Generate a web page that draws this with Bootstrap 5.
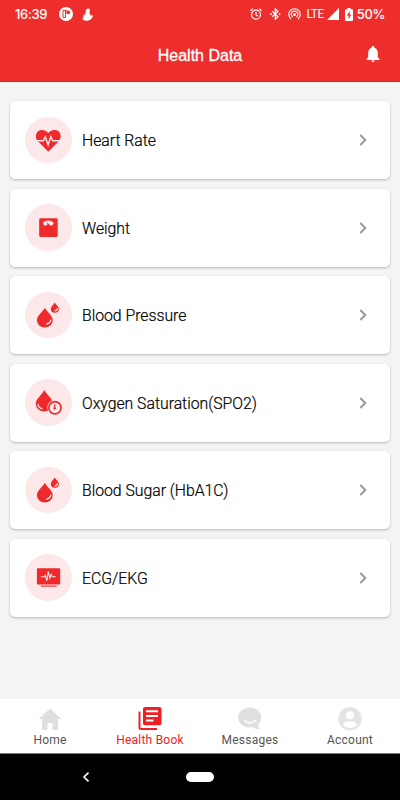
<!DOCTYPE html>
<html lang="en">
<head>
<meta charset="utf-8">
<meta name="viewport" content="width=device-width, initial-scale=1">
<title>Health Data</title>
<link href="https://cdn.jsdelivr.net/npm/bootstrap@5.3.0/dist/css/bootstrap.min.css" rel="stylesheet">
<style>
body{font-family:Roboto,"Liberation Sans",sans-serif;background:#f4f4f4;height:800px;overflow:hidden}
svg{display:block;flex:none}
.app-top{background:#ee2e2c;height:82px;border-bottom:1px solid #f01416;color:#fff}
.status-row{height:28px;padding:0 15px 0 15px;font-family:Inter,sans-serif;font-weight:500;font-size:13px;line-height:28px;letter-spacing:-.35px}
.lte{font-family:Roboto,sans-serif;font-weight:400;font-size:12px;letter-spacing:-.55px}
.title-row{height:53px;padding:0 20px 0 34px}
.app-title{font:500 16px/20px "Liberation Sans",sans-serif;-webkit-text-stroke:.3px #fff;padding-top:2px}
#st-p{margin-left:11.5px}
#st-duck{margin-left:9px;margin-right:auto}
#st-bt{margin-left:8px}
#st-hot{margin-left:7px}
.lte{margin-left:6px}
#st-sig{margin-left:3px}
#st-bat{margin-left:6.500px}
#st-pct{margin-left:3.500px}
.items{padding:19px 10px 0;gap:9.5px}
.item{height:78px;border-radius:5px;padding:0 23px 0 15px;box-shadow:0 1px 2.5px rgba(0,0,0,.25);background:#fff}
.disc{width:46.6px;height:46.6px;background:#fce8e9}
.item-name{font-size:15.8px;font-weight:300;line-height:20px;color:#000;margin-left:10.4px;letter-spacing:-.02px;padding-top:2px;-webkit-text-stroke:.2px #000}
.tabs{height:55px;background:#fff;border-bottom:1px solid #777}
.tab{color:#555;font-size:12px;line-height:14px;letter-spacing:.22px;padding-top:8px}
.tab.on{color:#ee2025}
.sys{height:46px;background:#000}
.back{margin-left:81px;margin-right:95px}
.pill{width:28px;height:10px;background:#fff}
</style>
<script src="https://cdn.jsdelivr.net/npm/bootstrap@5.3.0/dist/js/bootstrap.bundle.min.js"></script>
</head>
<body class="d-flex flex-column m-0">
<svg width="0" height="0" class="position-absolute" aria-hidden="true">
<symbol id="drops" viewBox="0 0 47 47"><path fill="#ee2a2c" d="M20 16C17.500 20.500 12 24 12 28.500A7.900 7.300 0 0 0 28 28.500C28 24 22.500 20.500 20 16ZM30 10.500C28.500 13 26 14.300 26 17A4.100 4 0 0 0 34.200 17C34.200 14.300 31.500 13 30 10.500Z"/><path d="M22 32.500Q25.500 31.500 26 28.500M30.500 19Q32.500 18.700 32.700 16.800" fill="none" stroke="#fce8e9" stroke-width="1.300" stroke-linecap="round"/></symbol>
<symbol id="chev" viewBox="0 0 8 14"><path d="M1.300 2L6.300 7L1.300 12" fill="none" stroke="#979797" stroke-width="1.900"/></symbol>
</svg>
<header class="app-top">
<div class="status-row d-flex align-items-center">
<span>16:39</span>
<svg id="st-p" width="14" height="14" viewBox="0 0 14 14"><circle cx="7" cy="7" r="7" fill="#fff"/><path d="M4 10.500V3.300H6.500V10.500ZM6.500 3.300H8" fill="none" stroke="#ee2e2c" stroke-width="1"/><circle cx="9.200" cy="5.300" r="1.900" fill="#ee2e2c"/></svg>
<svg id="st-duck" width="11" height="13" viewBox="0 0 11 13"><path fill="#fff" d="M4.300 1.500Q5.200 0 6.800 .5Q8.400 1.200 7.900 3.200L7.200 4.800Q8.600 6 8.400 7.600L10.900 7.200Q10.800 9.600 9.200 11Q7.500 12.800 4.500 12.700Q.8 12.500 .3 10L2 9.300L.7 7.700L3.300 6.700L2.300 5.500L4.400 4.600L3.300 3Z"/></svg>
<svg id="st-alarm" width="12" height="12" viewBox="0 0 12 12"><g fill="none" stroke="#fff" stroke-width="1.200"><circle cx="6" cy="6.700" r="4.500"/><path d="M6 4V7L8.100 8.300M.4 2.700L2.900.6M11.600 2.700L9.100.6"/></g></svg>
<svg id="st-bt" width="11" height="12" viewBox="0 0 11 12"><path d="M2.200 3.200L8 8.800L5.300 11.200V.8L8 3.200L2.200 8.800" fill="none" stroke="#fff" stroke-width="1.200"/><circle cx="1" cy="6" r=".9" fill="#fff"/><circle cx="9.600" cy="6" r=".9" fill="#fff"/></svg>
<svg id="st-hot" width="13" height="12" viewBox="0 0 13 12"><g fill="none" stroke="#fff" stroke-width="1.150"><path d="M3.100 11A5.700 5.700 0 1 1 9.900 11M4.500 9A3.300 3.300 0 1 1 8.500 9"/></g><circle cx="6.500" cy="6.700" r="1.400" fill="#fff"/></svg>
<span class="lte">LTE</span>
<svg id="st-sig" width="12" height="12" viewBox="0 0 12 12"><path d="M12 0V12H0Z" fill="#fff"/></svg>
<svg id="st-bat" width="8" height="13" viewBox="0 0 8 13"><path d="M2.500 0H5.500V1.200H7Q8 1.200 8 2.200V12Q8 13 7 13H1Q0 13 0 12V2.200Q0 1.200 1 1.200H2.500Z" fill="#fff"/><path d="M4.700 3L1.800 7.500H3.600V11.200L6.300 6.600H4.700Z" fill="#ee2e2c"/></svg>
<span id="st-pct">50%</span>
</div>
<div class="title-row d-flex align-items-center">
<div class="app-title flex-grow-1 text-center">Health Data</div>
<svg width="14" height="17" viewBox="0 0 14 17"><path fill="#fff" d="M7 0C8 0 8.400.7 8.400 1.700C10.800 2.300 11.800 4.500 11.800 7V11.200L13.500 13V14H.5V13L2.200 11.200V7C2.200 4.500 3.200 2.300 5.600 1.700C5.600.7 6 0 7 0ZM5.400 14.600H8.600Q8.500 16.300 7 16.300T5.400 14.600Z"/></svg>
</div>
</header>
<main class="items d-flex flex-column flex-grow-1">
<div class="item d-flex align-items-center"><div class="disc rounded-circle"><svg width="46.600" height="46.600" viewBox="0 0 47 47"><path fill="#ee2a2c" d="M23.500 35L13 24.500C9 19.500 11.500 13 17 13Q21 13 23.500 16.200Q26 13 30 13C35.500 13 38 19.500 34 24.500Z"/><path d="M10 24H18.500L20.500 20L23.300 28L26 20L28 24H37" fill="none" stroke="#fce8e9" stroke-width="1.500"/></svg></div><div class="item-name flex-grow-1">Heart Rate</div><svg width="8" height="14"><use href="#chev"/></svg></div>
<div class="item d-flex align-items-center"><div class="disc rounded-circle"><svg width="46.600" height="46.600" viewBox="0 0 47 47"><rect x="14.300" y="14.300" width="18.700" height="19" rx="1.500" fill="#ee2a2c"/><path d="M18 18.700Q23.500 14.700 29 18.700L27.500 22Q26 21.300 25.200 21.700L22.500 18.500L22.400 21.500Q20.500 21.200 19.500 22Z" fill="#fce8e9"/></svg></div><div class="item-name flex-grow-1">Weight</div><svg width="8" height="14"><use href="#chev"/></svg></div>
<div class="item d-flex align-items-center"><div class="disc rounded-circle"><svg width="46.600" height="46.600"><use href="#drops"/></svg></div><div class="item-name flex-grow-1">Blood Pressure</div><svg width="8" height="14"><use href="#chev"/></svg></div>
<div class="item d-flex align-items-center"><div class="disc rounded-circle"><svg width="46.600" height="46.600" viewBox="0 0 47 47"><path fill="#ee2a2c" d="M19.500 11C17 16 10.800 20 10.800 25A8.700 7.700 0 0 0 28.200 25C28.200 20 22 16 19.500 11Z"/><path d="M13 25.500Q13.500 29 17 30" fill="none" stroke="#fce8e9" stroke-width="1.300" stroke-linecap="round"/><circle cx="30.200" cy="29" r="7.700" fill="#fce8e9"/><circle cx="30.200" cy="29" r="6.200" fill="none" stroke="#ee2a2c" stroke-width="1.700"/><path d="M30 25.500V29" stroke="#ee2a2c" stroke-width="1.200"/><circle cx="30" cy="29.500" r="1.300" fill="#ee2a2c"/></svg></div><div class="item-name flex-grow-1">Oxygen Saturation(SPO2)</div><svg width="8" height="14"><use href="#chev"/></svg></div>
<div class="item d-flex align-items-center"><div class="disc rounded-circle"><svg width="46.600" height="46.600"><use href="#drops"/></svg></div><div class="item-name flex-grow-1">Blood Sugar (HbA1C)</div><svg width="8" height="14"><use href="#chev"/></svg></div>
<div class="item d-flex align-items-center"><div class="disc rounded-circle"><svg width="46.600" height="46.600" viewBox="0 0 47 47"><rect x="12" y="14.300" width="23.500" height="16.400" rx="1" fill="#ee2a2c"/><path d="M16 32.400H32" stroke="#ee2a2c" stroke-width="1.200"/><path d="M16 23H19.500L20.500 21.500L22 27L23.500 17.500L25 24.500L26.500 20.500L27.500 23H31" fill="none" stroke="#fce8e9" stroke-width="1.100"/></svg></div><div class="item-name flex-grow-1">ECG/EKG</div><svg width="8" height="14"><use href="#chev"/></svg></div>
</main>
<nav class="tabs row g-0 text-center">
<div class="tab col d-flex flex-column align-items-center"><svg width="24" height="26" viewBox="0 0 24 26"><path d="M12 1.500L23.300 12H20V23H14.500V16H9.500V23H4V12H.7Z" fill="#dfdfdf"/></svg><span>Home</span></div>
<div class="tab on col d-flex flex-column align-items-center"><svg width="24" height="26" viewBox="0 0 24 26"><rect x="5" y="0" width="18.500" height="18.300" rx="2" fill="#ee2025"/><path d="M8 4.300H20M8 9H20M8 13.500H15.500" stroke="#fff" stroke-width="1.900"/><path d="M1.500 4.500V20.500Q1.500 22 3 22H19" fill="none" stroke="#ee2025" stroke-width="2"/></svg><span>Health Book</span></div>
<div class="tab col d-flex flex-column align-items-center"><svg width="24" height="26" viewBox="0 0 24 26"><ellipse cx="11.700" cy="10.500" rx="11.600" ry="10" fill="#dfdfdf"/><path d="M13 19Q17 22.500 21.500 22.300Q20 20 20.500 16Z" fill="#dfdfdf"/><path d="M6.500 13.500Q12 18.200 17.700 13.500" fill="none" stroke="#fff" stroke-width="1.500" stroke-linecap="round"/></svg><span>Messages</span></div>
<div class="tab col d-flex flex-column align-items-center"><svg width="24" height="26" viewBox="0 0 24 26"><circle cx="12" cy="11.700" r="11.700" fill="#e4e4e4"/><circle cx="12" cy="8.200" r="4" fill="#fff"/><path d="M5 17.500Q7 14.300 12 14.300T19 17.500Q16 21 12 21T5 17.500Z" fill="#fff"/></svg><span>Account</span></div>
</nav>
<footer class="sys d-flex align-items-center">
<svg class="back" width="10" height="12" viewBox="0 0 10 12"><path d="M7.500 1.700L3 6L7.500 10.300" fill="none" stroke="#fff" stroke-width="1.600"/></svg>
<div class="pill rounded-pill"></div>
</footer>
</body>
</html>
